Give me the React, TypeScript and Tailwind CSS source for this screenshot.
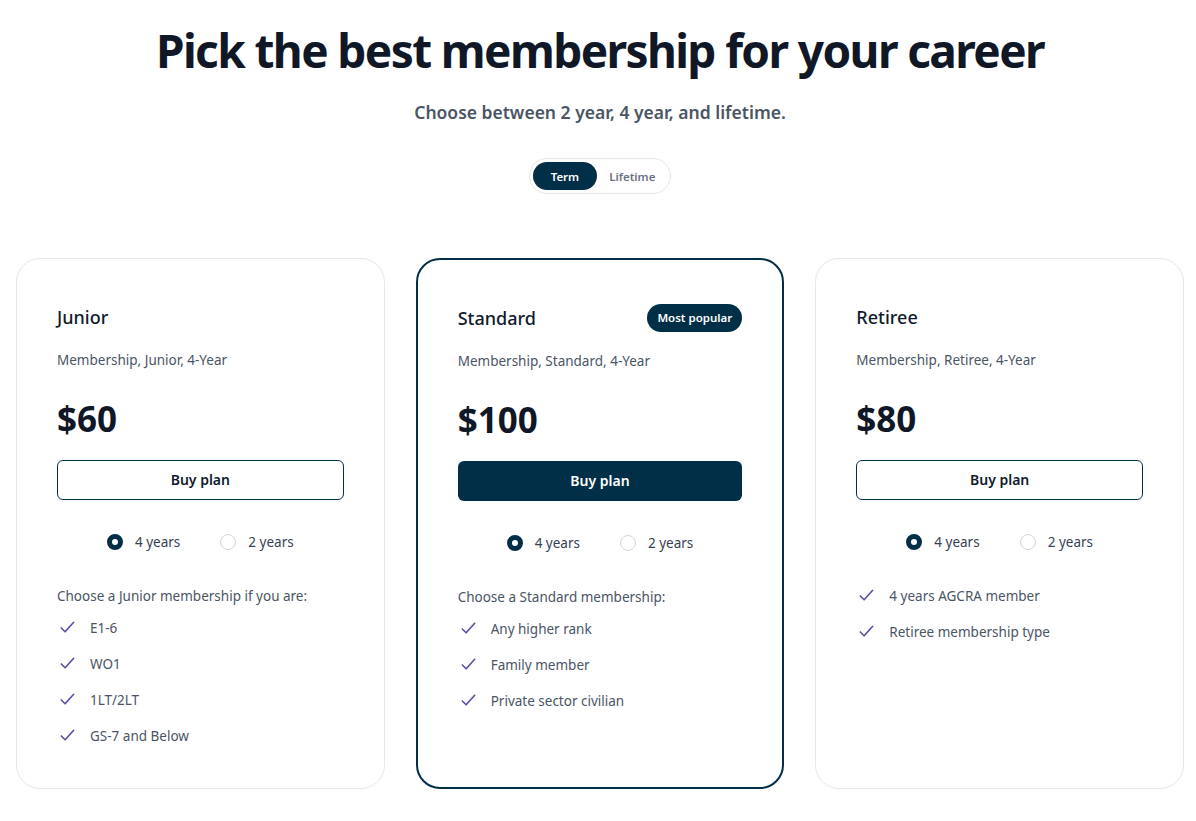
import React, { useState } from 'react';

type Plan = {
  name: string;
  desc: string;
  price: string;
  popular?: boolean;
  intro?: string;
  features: string[];
};

const plans: Plan[] = [
  {
    name: 'Junior',
    desc: 'Membership, Junior, 4-Year',
    price: '$60',
    intro: 'Choose a Junior membership if you are:',
    features: ['E1-6', 'WO1', '1LT/2LT', 'GS-7 and Below'],
  },
  {
    name: 'Standard',
    desc: 'Membership, Standard, 4-Year',
    price: '$100',
    popular: true,
    intro: 'Choose a Standard membership:',
    features: ['Any higher rank', 'Family member', 'Private sector civilian'],
  },
  {
    name: 'Retiree',
    desc: 'Membership, Retiree, 4-Year',
    price: '$80',
    features: ['4 years AGCRA member', 'Retiree membership type'],
  },
];

const Check = () => (
  <svg width="19" height="19" viewBox="0 0 20 20" fill="none" className="shrink-0">
    <path d="M3.5 10.5l4 4 9-10" stroke="#5b4fa3" strokeWidth="1.7" strokeLinecap="round" strokeLinejoin="round" />
  </svg>
);

const Radio = ({ checked }: { checked: boolean }) =>
  checked ? (
    <span className="w-4 h-4 rounded-full border-[5px] border-[#012f47] bg-white" />
  ) : (
    <span className="w-4 h-4 rounded-full border border-gray-300 bg-white" />
  );

const PlanCard = ({ plan }: { plan: Plan }) => {
  const [term, setTerm] = useState('4');
  return (
    <div
      className={
        'rounded-3xl px-10 pt-[44px] pb-[42px] bg-white ' +
        (plan.popular ? 'border-2 border-[#012f47]' : 'border border-gray-200')
      }
    >
      <div className="flex items-center justify-between h-[28px]">
        <h3 className="text-[18px] font-medium text-[#0f1b2d]">{plan.name}</h3>
        {plan.popular && (
          <span className="rounded-full bg-[#012f47] text-white text-[11.5px] font-semibold px-[10px] py-[5px] leading-[18px]">
            Most popular
          </span>
        )}
      </div>
      <p className="mt-[19px] text-[13.5px] text-gray-600">{plan.desc}</p>
      <p className="mt-[28px] text-[35px] font-bold leading-[40px] text-gray-900">{plan.price}</p>
      <button
        className={
          'mt-[21px] w-full h-[40px] rounded-md text-[14px] font-semibold ' +
          (plan.popular ? 'bg-[#012f47] text-white' : 'border border-[#012f47] text-[#0f1b2d] bg-white')
        }
      >
        Buy plan
      </button>
      <div className="mt-[32px] flex justify-center gap-10 text-[13.5px] text-gray-700">
        <label className="flex items-center gap-3 cursor-pointer" onClick={() => setTerm('4')}>
          <Radio checked={term === '4'} />
          4 years
        </label>
        <label className="flex items-center gap-3 cursor-pointer" onClick={() => setTerm('2')}>
          <Radio checked={term === '2'} />
          2 years
        </label>
      </div>
      <div className="mt-[34px] text-[13.5px] text-gray-600">
        {plan.intro && <p className="mb-[12px] leading-[20px]">{plan.intro}</p>}
        <ul className="space-y-4">
          {plan.features.map((f) => (
            <li key={f} className="flex items-center gap-[13px] pl-[1px] leading-[20px]">
              <Check />
              {f}
            </li>
          ))}
        </ul>
      </div>
    </div>
  );
};

export default function App() {
  const [mode, setMode] = useState('term');
  return (
    <div className="min-h-screen bg-white font-['Noto_Sans',sans-serif] pl-4 pr-3 pt-[22px] pb-8">
      <h1 className="text-center text-[46px] font-bold leading-[56px] text-gray-900 tracking-[-0.035em]">
        Pick the best membership for your career
      </h1>
      <p className="mt-[21px] text-center text-[17.5px] font-semibold text-gray-600">
        Choose between 2 year, 4 year, and lifetime.
      </p>
      <div className="mt-[33px] flex justify-center">
        <div className="flex rounded-full border border-gray-200 p-[3px] text-[11.5px] font-semibold">
          <button
            onClick={() => setMode('term')}
            className={'rounded-full px-[18px] h-[28px] ' + (mode === 'term' ? 'bg-[#012f47] text-white' : 'text-gray-500')}
          >
            Term
          </button>
          <button
            onClick={() => setMode('lifetime')}
            className={'rounded-full px-[12px] h-[28px] ' + (mode === 'lifetime' ? 'bg-[#012f47] text-white' : 'text-gray-500')}
          >
            Lifetime
          </button>
        </div>
      </div>
      <div className="mt-[64px] grid grid-cols-3 gap-[31px] items-stretch">
        {plans.map((p) => (
          <PlanCard key={p.name} plan={p} />
        ))}
      </div>
    </div>
  );
}
